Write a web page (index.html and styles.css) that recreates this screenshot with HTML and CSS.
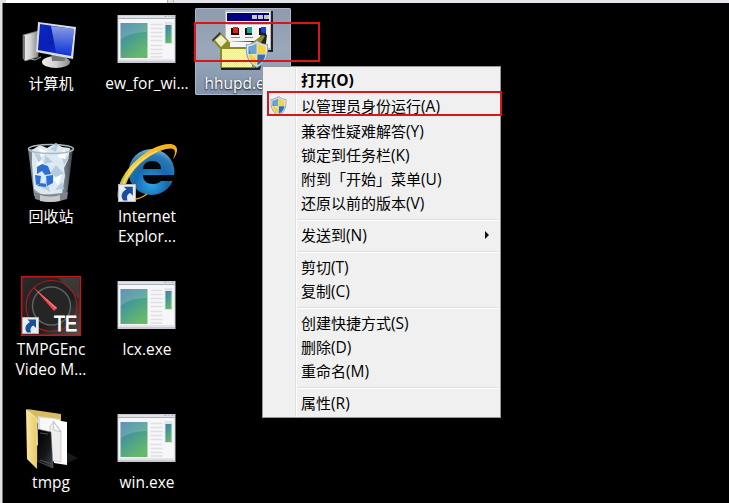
FILE: index.html
```
<!DOCTYPE html>
<html lang="zh-CN">
<head>
<meta charset="utf-8">
<title>桌面</title>
<link rel="stylesheet" href="styles.css">
</head>
<body>
<svg class="defs" width="0" height="0" aria-hidden="true">
  <defs>
    <linearGradient id="screen" x1="0" y1="0" x2="1" y2="1"><stop offset="0" stop-color="#0b26c8"/><stop offset=".45" stop-color="#0820b4"/><stop offset="1" stop-color="#1238e0"/></linearGradient>
    <linearGradient id="glare" x1="0" y1="0" x2="0" y2="1"><stop offset="0" stop-color="#b5c6f5"/><stop offset=".9" stop-color="#2347dc"/></linearGradient>
    <linearGradient id="metal"><stop offset="0" stop-color="#f0f0f0"/><stop offset=".5" stop-color="#d0d0d0"/><stop offset="1" stop-color="#8c8c8c"/></linearGradient>
    <linearGradient id="pane" x1="0" y1="0" x2=".6" y2="1"><stop offset="0" stop-color="#3f7cab"/><stop offset=".5" stop-color="#4a9c91"/><stop offset="1" stop-color="#66b96a"/></linearGradient>
    <linearGradient id="folder"><stop offset="0" stop-color="#fbeaa0"/><stop offset="1" stop-color="#e3c667"/></linearGradient>
    <linearGradient id="ring" x1="0" y1="1" x2="1" y2="0"><stop offset="0" stop-color="#9fae3c"/><stop offset=".4" stop-color="#ffd23c"/><stop offset="1" stop-color="#f2ab16"/></linearGradient>
    <radialGradient id="ie" cx=".5" cy=".75" r=".8"><stop offset="0" stop-color="#2fa8ea"/><stop offset=".45" stop-color="#1668ae"/><stop offset=".75" stop-color="#2b7ab4"/><stop offset="1" stop-color="#8cc4e2"/></radialGradient>
    <linearGradient id="dial" x1="0" y1="0" x2="1" y2="1"><stop offset="0" stop-color="#2a2a2a"/><stop offset=".6" stop-color="#1c1c1c"/><stop offset="1" stop-color="#555"/></linearGradient>
    <linearGradient id="glass"><stop offset="0" stop-color="#8397a8"/><stop offset=".2" stop-color="#d5e1ea"/><stop offset=".75" stop-color="#b4c4d0"/><stop offset="1" stop-color="#4c555d"/></linearGradient>
    <linearGradient id="smoke" x1="0" y1="0" x2="1" y2="1"><stop offset="0" stop-color="#000"/><stop offset=".6" stop-color="#15171a"/><stop offset="1" stop-color="#44484d"/></linearGradient>
    <pattern id="dither" width="2" height="2" patternUnits="userSpaceOnUse"><path fill="#eeee66" d="M0 0h2v2H0z"/><path fill="#fffcc8" d="M0 0h1v1H0zM1 1h1v1H1z"/></pattern>
    <symbol id="app" viewBox="0 0 58 48">
      <path fill="#c7cad0" d="M0 0h58v48H0z"/><path fill="#f7f7f9" d="M1 4h56v42H1z"/>
      <path fill="#dfe2e7" d="M1 1h56v2H1z"/><path fill="#a9aeb7" d="M1 3h56v1H1zM47 1h2v1h-2zM51 1h1v1h-1zM54 1h2v1h-2z"/>
      <path fill="#e3e3ea" d="M2 44h54v2H2z"/>
      <path fill="url(#pane)" d="M3 8h27v35H3z"/><path fill="#fff" opacity=".17" d="M3 8h27v9Q12 17 3 25z"/>
      <path stroke="#dfdfe4" stroke-width="1.500" d="M33 9.500h12M33 13.500h12M33 17.500h12M33 21.500h12M33 25.500h12M33 30.500h12M33 34.500h12M33 38.500h12M33 42h12"/>
      <path fill="#e1e3e7" d="M47 7h8v22h-8z"/><path fill="url(#pane)" d="M48 10h6v18h-6z"/>
    </symbol>
    <symbol id="shield" viewBox="0 0 24 28">
      <path fill="#8fa6b8" d="M12 0C9 3 5 4 1 4c-1 11 1 19 11 24C22 23 24 15 23 4 19 4 15 3 12 0z"/>
      <path fill="#dfe8ed" d="M12 1.300C9 4 5.500 5 2 5c-.6 10 1.500 17 10 21.700C20.500 22 22.600 15 22 5c-3.500 0-7-1-10-3.700z"/>
      <path fill="#3d84c6" d="M11.600 3C9 5 6.500 6 3.500 6.200V14h8.100z"/><path fill="#f7d243" d="M12.400 3C15 5 17.500 6 20.500 6.200V14h-8.100z"/>
      <path fill="#f4cf39" d="M3.600 14.500c.7 5 3.400 8.200 8 10.800V14.500z"/><path fill="#2872b5" d="M20.400 14.500c-.7 5-3.400 8.200-8 10.800V14.500z"/>
      <path fill="#fff" opacity=".25" d="M3.500 6C7 6 9 5 12 2.500V20Q5 17 3.500 6z"/>
    </symbol>
    <symbol id="shortcut" viewBox="0 0 17 17">
      <path fill="#e9edf0" stroke="#b4bac0" d="M.5.500h16v16H.5z"/>
      <path fill="#1a4f9c" d="M5.500 2.500H14V11l-2.500-2.500C8.500 10 8 12 9 15.500H5C2 11.500 3.500 7.500 8 5z"/>
    </symbol>
  </defs>
</svg>

<div class="frame">
  <div class="strip"><span class="tab"></span><span class="gap"></span></div>
  <main class="desktop">
    <div class="item">
      <svg class="art" viewBox="3 8 96 62">
        <path fill="url(#metal)" stroke="#777" stroke-width=".7" d="M23 35l15-4v26l-13 4-2-3z"/>
        <path fill="#777" d="M23 35l2 1v24l-2-2z"/><path stroke="#aaa" fill="none" d="M31 59l4 1 6-3"/>
        <ellipse cx="56" cy="62" rx="14" ry="6" fill="url(#metal)"/><path fill="#777" d="M51 53l14 2v6H52z"/>
        <path fill="#d9dce0" d="M38 22l38 5-3 32-37-7z"/><path fill="url(#screen)" d="M40 24l34 5-3 27-33-6z"/>
        <path fill="url(#glare)" opacity=".75" d="M51 26l23 3-3 25-15-2z"/>
      </svg>
      <span class="label cjk">计算机</span>
    </div>
    <div class="item">
      <svg class="art" viewBox="99 8 96 62"><use href="#app" x="117" y="15" width="59" height="48"/></svg>
      <span class="label">ew_for_wi...</span>
    </div>
    <div class="item selected">
      <svg class="art" viewBox="195 8 96 62">
        <path fill="#222" d="M226 11h47v41h-47z"/><path fill="#b8bcc8" d="M225 10h46v40h-46z"/><path fill="#f3f3f3" d="M226 12h44v36h-44z"/>
        <path fill="#000080" d="M227 13h42v8h-42z"/><path fill="#c8c8c8" d="M252 15h5v4h-5zM258 15h5v4h-5zM264 15h5v4h-5z"/><path fill="#c6c6ca" d="M227 22h42v3h-42z"/>
        <path fill="#111" d="M231 28h8v7h-8zM245 28h7v7h-7zM259 28h7v7h-7z"/><path fill="#dc2714" d="M233 27h5v6h-5z"/><path fill="#18a99d" d="M247 27h5v6h-5z"/><path fill="#1743dc" d="M261 27h5v6h-5z"/>
        <path stroke="#888" d="M231 37.500h9M245 37.500h8"/>
        <path fill="#222" d="M221 47l7-5 30-1 4-9 5 3-2 16-5 19h-39z"/>
        <path fill="#8b8b25" d="M220 46l8-4h25l9-7 3 1-7 12-3 20h-35z"/><path fill="#f6f6f6" d="M230 42h22l-4 5h-18z"/><path fill="url(#dither)" d="M222 49h30v18h-30z"/>
        <path fill="#222" d="M212 40l8-8 1 2-8 8z"/><path fill="#8b8b25" d="M213 41l8-8 8 8-8 9z"/><path fill="#eeeec0" d="M215 40l6-5 6 6-6 6z"/>
        <use href="#shield" x="245" y="40" width="24" height="28"/>
      </svg>
      <span class="label">hhupd.exe</span>
    </div>
    <div class="item">
      <svg class="art" viewBox="3 141 96 62">
        <path fill="url(#glass)" opacity=".75" d="M28 149h45l-6 47q-16 7-33 0z"/>
        <path fill="#dce9f3" d="M32 150l8-5 7 3 9-5 6 4 8 1-2 12-4 8 1 8-3 17-20 2-8-6-2-25z"/>
        <path fill="#b7cddd" d="M34 153l9 3-4 7zM45 155l8 7-9 2zM61 153l8 5-5 7zM50 173l6-8 8 9-8 3zM41 187l6-7 3 12zM55 190l7-8 2 7zM50 149l8-5-2 8z"/>
        <path fill="#fff" d="M39 148l8 3-6 7zM57 157l8-8 1 10zM53 179l9-5-4 11zM36 164l6-4 1 9z"/>
        <path fill="#2c6fd1" d="M37 167l5-3 6 2 3 8-6 1-3-4-5 3zM35 175l6 1-1 8-4 1zM46 176l7-1v8l-6 3zM37 186l4-3 5 1v3z"/>
        <path fill="#7e858a" d="M34 192q16 6 34 0l-1 7q-16 6-32 0z"/><path fill="#c8c9ca" d="M40 195q11 3 20 0v6q-10 2-20 0z"/>
        <ellipse cx="51" cy="149" rx="22.500" ry="4.500" fill="none" stroke="#aeb8bf" stroke-width="1.500"/>
      </svg>
      <span class="label cjk">回收站</span>
    </div>
    <div class="item">
      <svg class="art" viewBox="99 141 96 62">
        <circle cx="151.500" cy="172" r="23" fill="url(#ie)"/>
        <path fill="#030608" d="M143 169c0-5 4-8 9-8 6 0 9 3 9 8zM143 175h33v6h-15c-2 2-4 3-8 3-6 0-10-3-10-9z"/>
        <path fill="url(#ring)" d="M118 199c-3-16 12-38 34-50 14-7 26-7 25 2-1 4-2 6-4 8 4-9 2-12-7-10-22 6-40 26-41 41z"/>
        <path fill="none" stroke="#f5f3ac" stroke-width="1" d="M121 193c2-18 19-34 36-42"/>
        <path fill="none" stroke="#e6a918" stroke-width="1.500" d="M135 199q5 0 12-5"/>
        <use href="#shortcut" x="118" y="184" width="18" height="18"/>
      </svg>
      <span class="label">Internet Explor...</span>
    </div>
    <div></div>
    <div class="item">
      <svg class="art" viewBox="3 274 96 62">
        <path fill="url(#dial)" stroke="#c5161b" stroke-width="1.500" d="M21.700 276.700h58.600v58.600H21.700z"/>
        <path fill="#fff" opacity=".12" d="M58 278h21v21z"/>
        <circle cx="51.500" cy="306" r="25.500" fill="none" stroke="#a51b1e" stroke-width="1.200"/>
        <circle cx="51.500" cy="306" r="19" fill="#252525" stroke="#616161" stroke-width="1.500"/>
        <path fill="#f0434b" d="M33 287l24 21-3 3z"/><path fill="#ff8085" d="M33 287l24 21-1 1z"/>
        <use href="#shortcut" x="22" y="317" width="17" height="17"/>
        <text class="mark" x="54" y="330.500" textLength="23" lengthAdjust="spacingAndGlyphs">TE</text>
      </svg>
      <span class="label">TMPGEnc Video M...</span>
    </div>
    <div class="item">
      <svg class="art" viewBox="99 274 96 62"><use href="#app" x="117" y="281" width="59" height="48"/></svg>
      <span class="label">lcx.exe</span>
    </div>
    <div></div>
    <div class="item">
      <svg class="art" viewBox="3 407 96 62">
        <path fill="#181818" d="M66 452l12 6-12 6z"/>
        <path fill="#d8ba61" d="M27 409l34 5v9l-20 5z"/>
        <path fill="#d9dcde" d="M38 416l22 3v43l-22-2z"/><path fill="#f8f8f8" d="M40 418l15 1 8 6v37l-22-2z"/>
        <path fill="#fff" d="M56 420l11 2v43l-13-2z"/><path fill="#ededed" stroke="#b5b5b5" stroke-width=".6" d="M50 426l4-4 7 9v31l-11-2z"/><path fill="#fafafa" stroke="#aaa" stroke-width=".6" d="M53 421l1 9 7 2z"/>
        <path fill="url(#smoke)" stroke="#777" stroke-width=".5" d="M37 429l14 3 2 36-16-7z"/><path stroke="#4d5155" fill="none" d="M40 433l8 1M40 460l12 4"/>
        <path fill="url(#folder)" d="M26 409l11 9 1 27-1 1v23l-10-10z"/><path stroke="#fff0ba" fill="none" stroke-width=".7" d="M27 410l10 9v26"/>
      </svg>
      <span class="label">tmpg</span>
    </div>
    <div class="item">
      <svg class="art" viewBox="99 407 96 62"><use href="#app" x="117" y="414" width="59" height="48"/></svg>
      <span class="label">win.exe</span>
    </div>
  </main>
</div>

<div class="mark-box mark-file"></div>
<nav class="menu">
  <div class="row default">打开<span>(O)</span></div>
  <div class="row admin"><svg class="shield" viewBox="0 0 24 28"><use href="#shield" width="24" height="28"/></svg>以管理员身份运行<span>(A)</span></div>
  <div class="row">兼容性疑难解答<span>(Y)</span></div>
  <div class="row">锁定到任务栏<span>(K)</span></div>
  <div class="row">附到「开始」菜单<span>(U)</span></div>
  <div class="row">还原以前的版本<span>(V)</span></div>
  <div class="sep"></div>
  <div class="row">发送到<span>(N)</span><i class="arrow"></i></div>
  <div class="sep"></div>
  <div class="row">剪切<span>(T)</span></div>
  <div class="row">复制<span>(C)</span></div>
  <div class="sep"></div>
  <div class="row">创建快捷方式<span>(S)</span></div>
  <div class="row">删除<span>(D)</span></div>
  <div class="row">重命名<span>(M)</span></div>
  <div class="sep"></div>
  <div class="row">属性<span>(R)</span></div>
</nav>
<div class="mark-box mark-admin"></div>
</body>
</html>
```
FILE: styles.css
```
* { box-sizing: border-box; }

body {
  margin: 0;
  width: 729px;
  height: 503px;
  overflow: hidden;
  position: relative;
  background: #000;
  font-family: "Open Sans", "Noto Sans CJK SC", sans-serif;
  font-size: 15px;
}

.defs { position: absolute; }

.frame {
  height: 503px;
  border-left: 2px solid #dfe3e2;
}

.strip {
  display: flex;
  height: 3px;
  background: #e4e4eb;
}

.tab { width: 166px; background: #fff; border-left: 4px solid #e0e0e2; border-right: 1px solid #aaa; }
.gap { width: 6px; background: #e0e0e4; border-right: 1px solid #b5b5b5; }

.desktop {
  display: grid;
  grid-template-columns: repeat(3, 96px);
  grid-auto-rows: 133px;
  padding-top: 5px;
  height: 500px;
  overflow: hidden;
  border-left: 1px solid #777;
}

.item {
  display: flex;
  flex-direction: column;
  align-items: center;
  height: 87px;
}

.selected {
  border-radius: 2px;
  background: linear-gradient(#8e9bad, #9aa8ba 50%, #8093ac);
  box-shadow: inset 0 0 0 1px #a9b8cb;
}

.art { display: block; width: 96px; height: 62px; flex: none; }

.label {
  color: #fff;
  width: 92px;
  font-size: 15.5px;
  line-height: 20px;
  margin-top: 3px;
  text-align: center;
  text-shadow: 0 1px 2px #000;
}

.cjk { font-size: 15px; }

.mark { font: 22px "Liberation Sans", sans-serif; fill: #fff; stroke: #fff; stroke-width: .8px; }

.menu {
  position: absolute;
  left: 262px;
  top: 66px;
  width: 239px;
  height: 352px;
  padding: 2px;
  border: 1px solid #979797;
  background: linear-gradient(90deg, #f0f0f0 32px, #e1e1e1 32px 33px, #fff 33px 34px, #f0f0f0 34px);
  color: #000;
}

.row {
  display: flex;
  align-items: center;
  height: 24px;
  line-height: 22px;
  padding: 0 0 2px 36px;
  white-space: nowrap;
}

.row span { font-size: 15.5px; }

.default { font-weight: 700; }
.admin { height: 27px; padding-left: 5px; }
.shield { width: 17px; height: 20px; margin-right: 14px; }

.sep {
  height: 8px;
  margin-left: 32px;
  background: linear-gradient(transparent 3px, #dedede 3px 4px, #fff 4px 5px, transparent 5px);
}

.arrow {
  margin: 0 9px 0 auto;
  border-left: 4px solid #111;
  border-top: 4px solid transparent;
  border-bottom: 4px solid transparent;
}

.mark-box { position: absolute; border: 2px solid #d9171b; }
.mark-file { left: 194px; top: 22px; width: 126px; height: 40px; }
.mark-admin { left: 267px; top: 91px; width: 235px; height: 25px; }
```
